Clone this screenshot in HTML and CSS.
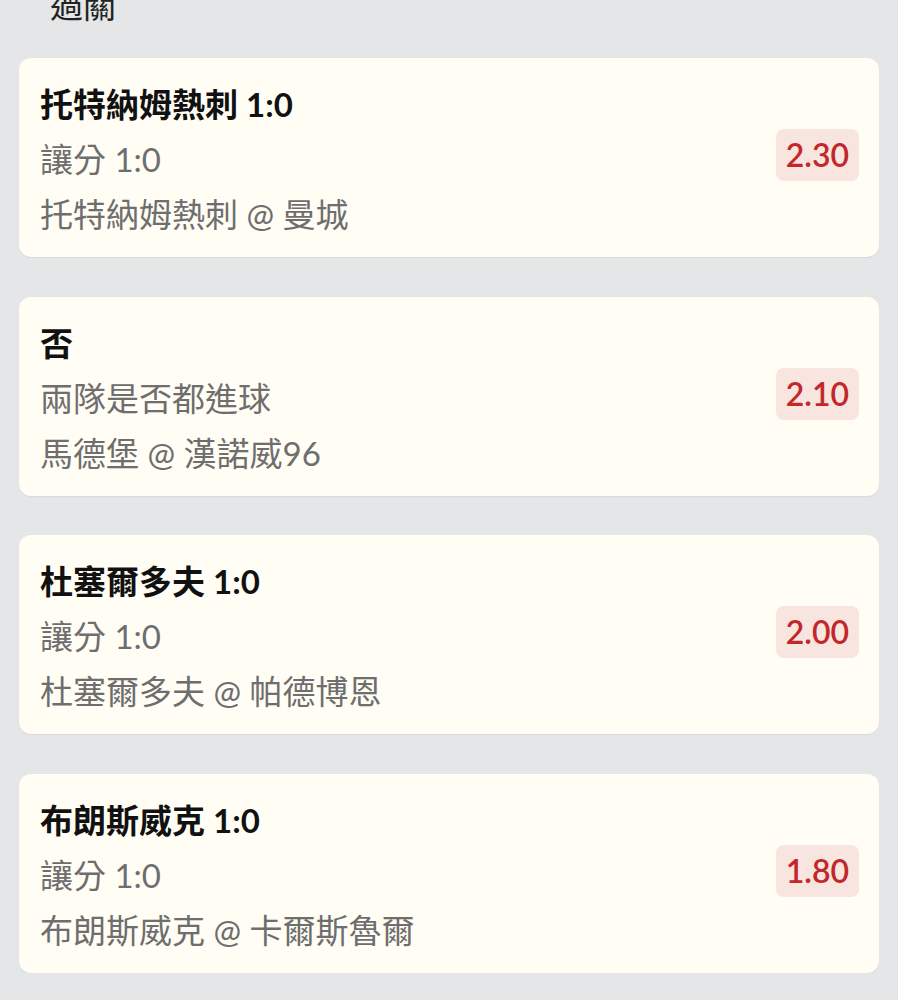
FILE: index.html
```html
<!DOCTYPE html>
<html lang="zh-Hant">
<head>
<meta charset="utf-8">
<link rel="stylesheet" href="styles.css">
</head>
<body>
<div class="page">
  <div class="header">過關</div>
  <div class="list">
    <div class="card">
      <div class="info">
        <div class="title">托特納姆熱刺 1:0</div>
        <div class="sub">讓分 1:0</div>
        <div class="sub">托特納姆熱刺 @ 曼城</div>
      </div>
      <div class="odds">2.30</div>
    </div>
    <div class="card">
      <div class="info">
        <div class="title">否</div>
        <div class="sub">兩隊是否都進球</div>
        <div class="sub">馬德堡 @ 漢諾威96</div>
      </div>
      <div class="odds">2.10</div>
    </div>
    <div class="card">
      <div class="info">
        <div class="title">杜塞爾多夫 1:0</div>
        <div class="sub">讓分 1:0</div>
        <div class="sub">杜塞爾多夫 @ 帕德博恩</div>
      </div>
      <div class="odds">2.00</div>
    </div>
    <div class="card">
      <div class="info">
        <div class="title">布朗斯威克 1:0</div>
        <div class="sub">讓分 1:0</div>
        <div class="sub">布朗斯威克 @ 卡爾斯魯爾</div>
      </div>
      <div class="odds">1.80</div>
    </div>
  </div>
</div>
</body>
</html>
```
FILE: styles.css
```css
html, body {
  margin: 0;
  padding: 0;
  background: #e5e6e8;
}
body {
  font-family: Lato, "Noto Sans CJK TC", sans-serif;
  overflow: hidden;
}
.page {
  padding: 0 19px;
}
.header {
  margin-top: -17px;
  padding-left: 31px;
  font-size: 33px;
  line-height: 44px;
  color: #222;
  height: 44px;
}
.list {
  margin-top: 31px;
  display: flex;
  flex-direction: column;
  gap: 39.5px;
}
.card {
  background: #fffdf4;
  border-radius: 12px;
  box-shadow: 0 1px 1px rgba(0,0,0,0.06);
  height: 199px;
  box-sizing: border-box;
  padding: 19px 20px 15px 21px;
  display: flex;
  align-items: center;
  justify-content: space-between;
}
.info {
  display: flex;
  flex-direction: column;
}
.title {
  font-size: 33px;
  font-weight: 700;
  color: #111;
  line-height: 55px;
}
.sub {
  font-size: 33px;
  color: #6e6e6e;
  line-height: 55px;
}
.odds {
  background: #f8e5df;
  color: #c2272a;
  font-size: 32px;
  font-weight: 600;
  line-height: 52px;
  padding: 0 10px;
  border-radius: 8px;
  margin-top: -9px;
}
```
